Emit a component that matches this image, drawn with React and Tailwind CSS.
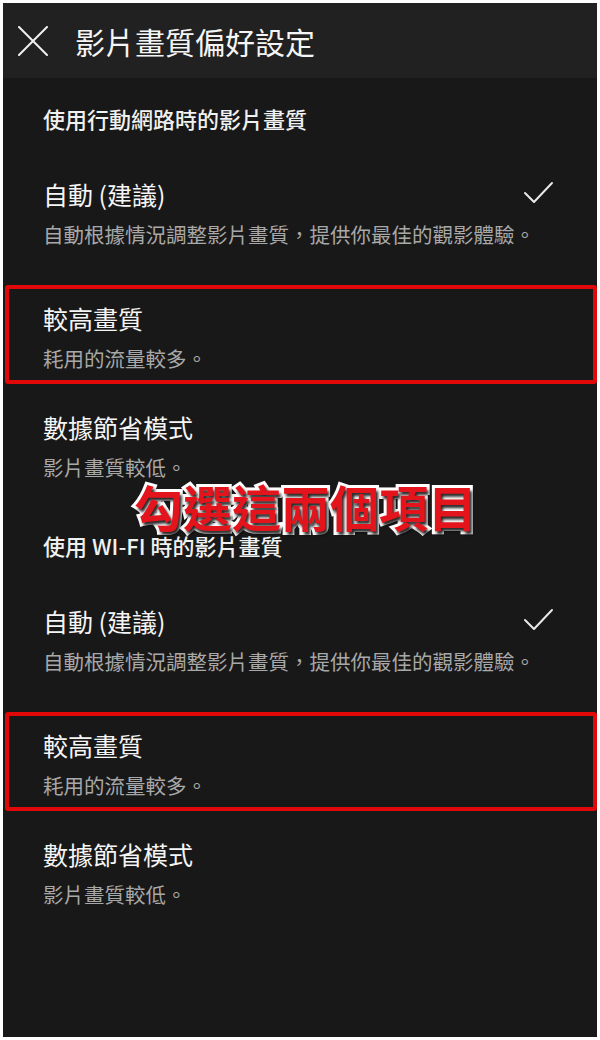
import React from "react";

const font = { fontFamily: '"Noto Sans CJK TC", "Noto Sans", sans-serif' };

function Check() {
  return (
    <svg width="32" height="26" viewBox="0 0 32 26" className="block">
      <polyline points="2,12 11,21 29,2" fill="none" stroke="#e8e8e8" strokeWidth="2" strokeLinecap="round" strokeLinejoin="round" />
    </svg>
  );
}

function Item({ title, desc, check }) {
  return (
    <div className="flex flex-col gap-[10px]">
      <div className="flex items-center justify-between pr-[42px]">
        <span className="text-[25px] leading-[32px] text-[#f5f5f5]">{title}</span>
        {check && <Check />}
      </div>
      <span className="text-[20.5px] leading-[28px] text-[#a8a8a8]">{desc}</span>
    </div>
  );
}

function Boxed({ title, desc }) {
  return (
    <div className="ml-[2px] border-[4px] border-[#e00808] rounded-[3px] pl-[34px] pt-[13px] pb-[8px]">
      <Item title={title} desc={desc} />
    </div>
  );
}

function Section({ heading }) {
  return (
    <div className="flex flex-col">
      <div className="pl-[40px] text-[22px] leading-[30px] font-medium text-[#f0f0f0]">{heading}</div>
      <div className="pl-[40px] mt-[45px]">
        <Item title="自動 (建議)" desc="自動根據情況調整影片畫質，提供你最佳的觀影體驗。" check />
      </div>
      <div className="mt-[37px]">
        <Boxed title="較高畫質" desc="耗用的流量較多。" />
      </div>
      <div className="pl-[40px] mt-[27px]">
        <Item title="數據節省模式" desc="影片畫質較低。" />
      </div>
    </div>
  );
}

export default function App() {
  return (
    <div className="w-[600px] h-[1040px] bg-white p-[3px] relative" style={font}>
      <div className="w-[594px] h-[1034px] bg-[#181818] flex flex-col overflow-hidden">
        <div className="h-[75px] bg-[#212121] flex items-center shrink-0">
          <svg width="30" height="30" viewBox="0 0 30 30" className="ml-[15px] block">
            <path d="M1 1 L29 29 M29 1 L1 29" stroke="#f0f0f0" strokeWidth="2" strokeLinecap="round" />
          </svg>
          <span className="ml-[27px] text-[30px] leading-[40px] text-[#f5f5f5]">影片畫質偏好設定</span>
        </div>
        <div className="pt-[25px] flex flex-col gap-[49px]">
          <Section heading="使用行動網路時的影片畫質" />
          <Section heading="使用 WI-FI 時的影片畫質" />
        </div>
      </div>
      <div
        className="absolute left-[134px] top-[481px] text-[49px] leading-none font-bold text-[#e3141c] [paint-order:stroke_fill] [-webkit-text-stroke:6px_#ffffff] [text-shadow:2px_3px_3px_rgba(0,0,0,0.85)] whitespace-nowrap"
      >
        勾選這兩個項目
      </div>
    </div>
  );
}
